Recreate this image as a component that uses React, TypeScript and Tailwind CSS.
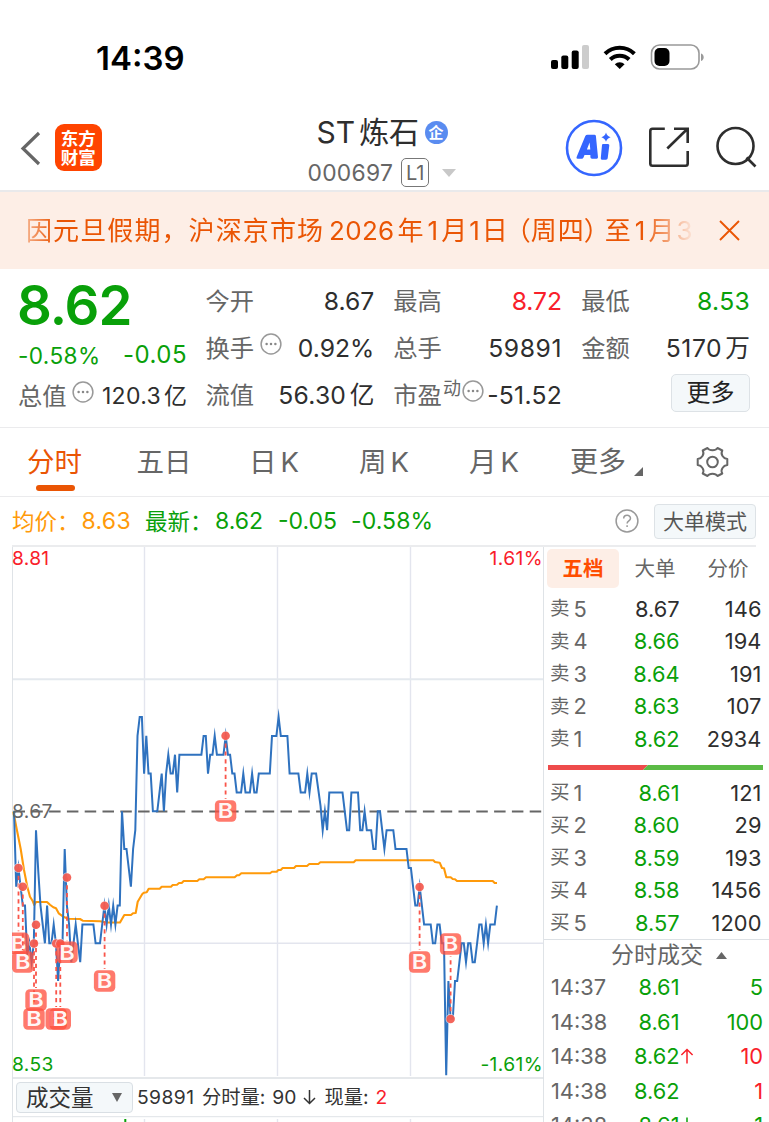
import React from "react";

const PRICE_TICKS: [number, number][] = [
  [0, 0], [1, -4], [2, -3], [3, -4], [4, -5], [5, -5], [6, -7.6], [7, -7], [8, -8], [9, -7], [10, -1], [11, -3.2], [12, -5],
  [14, -7], [15, -5], [16, -7], [17, -7], [18, -6], [19, -7], [20, -9], [21, -7], [22, -7], [23, -2], [24, -5], [25, -6],
  [26, -8], [27, -7], [28, -6], [29, -7], [30, -8], [31, -6], [36, -6], [37, -7], [39, -7], [40, -6], [41, -5], [42, -6],
  [43, -5], [44, -6], [45, -5], [46, -6], [47, -5], [48, -5], [49, 0], [50, -2], [51, -2], [53, -4], [54, -2], [55, -1],
  [56, 4], [57, 5], [58, 5], [59, 2], [60, 4], [61, 2], [62, 2], [63, 0], [65, 0], [66, 1], [67, 2], [68, 0], [69, 2],
  [70, 3], [71, 2], [72, 2], [73, 3], [74, 1], [75, 3], [85, 3], [86, 4], [87, 4], [88, 2], [89, 3], [90, 3], [91, 4],
  [92, 3], [95, 3], [96, 4], [97, 3], [98, 3], [99, 2], [100, 2], [101, 1], [103, 1], [104, 2], [105, 1], [107, 1],
  [108, 2], [109, 1], [110, 1], [111, 2], [116, 2], [117, 4], [119, 4], [120, 5], [121, 4], [124, 4], [125, 2], [129, 2],
  [130, 1], [132, 1], [133, 2], [134, 1], [135, 2], [137, 2], [139, 0.3], [140, -1], [141, 0], [142, -1], [143, 1],
  [149, 1], [151, -1], [152, -1], [153, 1], [156, 1], [157, -1], [158, -1], [159, 0], [160, -1], [162, -1], [163, -2],
  [164, -2], [165, 0], [166, 0], [168, -2], [169, -1], [172, -1], [173, -2], [178, -2], [179, -3], [180, -3], [182, -5],
  [183, -5], [184, -4], [185, -5], [186, -6], [189, -6], [190, -7], [191, -7], [192, -6], [193, -6], [194, -7], [195, -7],
  [196, -14], [197, -9], [198, -11], [199, -11], [200, -9], [201, -9], [202, -8], [203, -7], [204, -7], [205, -8],
  [206, -7], [207, -7], [208, -8], [209, -8], [210, -7], [211, -6], [212, -6], [213, -7], [214, -6], [215, -7], [216, -6],
  [218, -6], [219, -5],
];

const priceLine = PRICE_TICKS.map(([m, k]) => `${(14 + m * 2.205).toFixed(1)},${(811.3 - k * 18.86).toFixed(1)}`).join(" ");

const averageLine =
  "13.3,811.5 16.7,829 20.7,849 24,870 27.3,886.7 30,896.7 32.7,901 34.3,905 36,902 47,902 50,904.7 53.3,907.3 56,908.3 58.7,913.3 63.3,916.7 68.3,918.7 80,919 82.7,920.7 100,921.3 106.7,922.5 120,922.5 124.3,915 131,915 133,913.3 135.7,913 137.7,901.7 142.3,894 144,892.7 146.7,892.3 148.7,888.7 159.7,888.7 161.7,886.7 171,886.7 172.7,885 177,884.7 179,883 181.7,883 183.7,881 197.3,881 199.3,879.3 203.7,879.3 206,877.3 234.7,877.3 237,875.3 239,875.3 241.3,873.3 270,873.3 272,871.7 276.7,871.7 278.3,870 280.7,870 282.7,868 294,868 296,866 307,866 309.3,864 318.3,864 320.3,862.3 353.7,862.3 355.7,860.3 433.3,860.3 435,862 439.7,862.7 442,868 444,868.3 446.3,877.3 450.7,877.3 452.7,879 455,879.3 457,881 492.7,881 494.7,883 497,883";

const TRADES = [
  { x: 18.5, dot: 868, box: 943.3 },
  { x: 22.8, dot: 886.7, box: 962 },
  { x: 34, dot: 943.5, box: 1019 },
  { x: 36, dot: 924.7, box: 1000 },
  { x: 56.2, dot: 943.5, box: 1019 },
  { x: 60.3, dot: 943.5, box: 1019 },
  { x: 67, dot: 877.5, box: 952.3 },
  { x: 104.6, dot: 905.8, box: 981 },
  { x: 225.6, dot: 735.8, box: 811 },
  { x: 419.6, dot: 887, box: 962 },
  { x: 450.6, dot: 1019, box: 944 },
];

function Chart() {
  return (
    <svg className="block" width="544" height="577" viewBox="0 545 544 577">
      <defs>
        <clipPath id="plot"><rect x="12" y="545" width="532" height="577" /></clipPath>
      </defs>
      <g stroke="#e3e5ee" strokeWidth="1.4" fill="none">
        <path d="M144.5 547V1076M277.5 547V1076M410.5 547V1076M144.5 1119V1122M277.5 1119V1122M410.5 1119V1122" />
        <path d="M12 679.3H544" stroke="#e4e9ee" strokeWidth="2" />
        <path d="M12 943.3H544" />
        <path d="M12.5 545V1122M543.5 545V1122" stroke="#dfe3e7" strokeWidth="1" />
        <path d="M12 1078H544" stroke="#dde1e5" strokeWidth="1.5" />
        <path d="M12 1116.7H544" stroke="#dfe3e7" strokeWidth="1" />
      </g>
      <path d="M125.3 1119V1122" stroke="#09a009" strokeWidth="2" />
      <path d="M13.5 811.4H544" stroke="#666" strokeWidth="2" strokeDasharray="11.5 6.3" />
      <g clipPath="url(#plot)" fill="none">
        <polyline points={averageLine} stroke="#ff9a0a" strokeWidth="2.1" strokeLinejoin="round" />
        <polyline points={priceLine} stroke="#2f72bf" strokeWidth="2" strokeMiterlimit="10" />
        {TRADES.map((t, i) => {
          const down = t.box > t.dot;
          return (
            <g key={i}>
              <path
                d={`M${t.x} ${t.dot}V${down ? t.box - 12 : t.box + 12}`}
                stroke="#f9554a"
                strokeWidth="1.8"
                strokeDasharray="4.2 3.6"
              />
              <circle cx={t.x} cy={t.dot} r="5" fill="#fff" fillOpacity=".6" />
              <circle cx={t.x} cy={t.dot} r="4.3" fill="#f24a3e" fillOpacity=".85" />
              <rect x={t.x - 10.7} y={t.box - 10.7} width="21.4" height="21.4" rx="4.5" fill="#ff4f3e" fillOpacity=".76" />
              <text
                x={t.x}
                y={t.box + 7.2}
                textAnchor="middle"
                fontFamily="Inter, sans-serif"
                fontSize="20"
                fontWeight="600"
                textLength="15.5"
                lengthAdjust="spacingAndGlyphs"
                fill="#fff"
                fillOpacity=".95"
              >
                B
              </text>
            </g>
          );
        })}
      </g>
    </svg>
  );
}

function Dots({ className = "" }: { className?: string }) {
  return (
    <svg className={`shrink-0 ${className}`} width="22" height="22" viewBox="0 0 22 22" fill="none">
      <circle cx="11" cy="11" r="9.9" stroke="#999" strokeWidth="1.5" />
      <circle cx="6.6" cy="11" r="1.25" fill="#888" />
      <circle cx="11" cy="11" r="1.25" fill="#888" />
      <circle cx="15.4" cy="11" r="1.25" fill="#888" />
    </svg>
  );
}

function Stat({ label, value, color = "text-[#2e2e2e]", extra }: { label: string; value: React.ReactNode; color?: string; extra?: React.ReactNode }) {
  return (
    <div className="flex h-[47px] items-center whitespace-nowrap">
      <span className="text-[24.3px] text-[#666]">{label}</span>
      {extra}
      <span className={`ml-auto text-[24.7px] ${color}`}>{value}</span>
    </div>
  );
}

function Book({ side, no, price, qty, flat }: { side: string; no: number; price: string; qty: string; flat?: boolean }) {
  return (
    <div className="flex h-[32.5px] items-center pr-[7.5px] pl-[6px] text-[21.8px]">
      <span className="text-[19.5px] text-[#666]">{side}</span>
      <span className="ml-1 text-[#666]">{no}</span>
      <span className="flex-1" />
      <span className={`w-[80px] text-right ${flat ? "text-[#2e2e2e]" : "text-[#09a009]"}`}>{price}</span>
      <span className="w-[82px] text-right tracking-[0.1px] text-[#2e2e2e]">{qty}</span>
    </div>
  );
}

function Tick({ time, price, qty, up, arrow }: { time: string; price: string; qty: string; up?: boolean; arrow?: "up" | "down" }) {
  return (
    <div className="flex h-[34.5px] shrink-0 items-center pr-1.5 pl-[7px] text-[21.8px]">
      <span className="text-[#666]">{time}</span>
      <span className="flex-1" />
      <span className="text-[#09a009]">{price}</span>
      <span className="flex w-[83.5px] items-center">
        {arrow && (
          <svg className={arrow === "up" ? "text-[#f9202a]" : "rotate-180 text-[#09a009]"} width="14" height="18" viewBox="0 0 15 18" fill="none" stroke="currentColor" strokeWidth="1.6">
            <path d="M7.5 17V2M1.5 8l6-6 6 6" />
          </svg>
        )}
        <span className={`ml-auto ${up ? "text-[#f9202a]" : "text-[#09a009]"}`}>{qty}</span>
      </span>
    </div>
  );
}

function StatusBar() {
  return (
    <div className="flex h-[104px] items-start pr-[64px] pl-[96px]">
      <span className="mt-[38px] text-[33px] leading-10 font-semibold text-black">14:39</span>
      <svg className="mt-[44px] ml-auto" width="154" height="26" viewBox="551 44 154 26">
        <rect x="551" y="60" width="7" height="9" rx="2" />
        <rect x="561.3" y="55.5" width="7" height="13.5" rx="2" />
        <rect x="571.7" y="50.5" width="7" height="18.5" rx="2" />
        <rect x="582" y="45" width="7" height="24" rx="2" fill="#ccc" />
        <g fill="none" stroke="#000">
          <path d="M605 53.8a21 21 0 0 1 29.4 0" strokeWidth="4" />
          <path d="M610.3 59.5a13.4 13.4 0 0 1 18.8 0" strokeWidth="4" />
        </g>
        <path d="M619.7 69l-4.900-4.700a7 7 0 0 1 9.800 0z" />
        <rect x="651.5" y="45" width="47.5" height="24" rx="8" fill="none" stroke="#999" strokeWidth="1.6" />
        <rect x="654.5" y="48" width="15" height="18" rx="5" />
        <path d="M701 53.5c3.6 1 3.6 6.500 0 7.500z" fill="#999" />
      </svg>
    </div>
  );
}

function Header() {
  return (
    <div className="flex h-[88px] items-start border-b-2 border-[#e9e9eb] pr-3 pl-5">
      <svg className="mt-[27px]" width="21" height="36" viewBox="0 0 21 36" fill="none" stroke="#666" strokeWidth="3.2">
        <path d="M19 2L3 17.500L19 33" />
      </svg>
      <div className="mt-5 ml-[14px] flex h-[47px] w-[46.500px] flex-col items-center justify-center rounded-[9px] bg-[#ff4400] text-[17.500px] leading-[19px] font-bold text-white">
        <span>东方</span>
        <span>财富</span>
      </div>
      <div className="ml-[206px] flex w-[152px] flex-col">
        <div className="mt-2 flex h-10 items-center pl-[9px] text-[30px] whitespace-nowrap text-[#2e2e2e]">
          <span>ST</span>
          <span className="ml-[4px]">炼石</span>
          <span className="ml-[5.500px] flex h-[23px] w-[23px] items-center justify-center rounded-full bg-[#5a8cf0] text-[15px] leading-none font-bold text-white">企</span>
        </div>
        <div className="flex h-10 items-center pt-px text-[22.800px] text-[#666]">
          <span className="tracking-[0.300px]">000697</span>
          <span className="ml-[8px] flex h-[29px] w-[28px] items-center justify-center rounded-[5px] border border-[#777] text-[20px]">L1</span>
          <svg className="ml-[13px]" width="14" height="8" viewBox="0 0 14 8">
            <path d="M0 0H14L7 8z" fill="#c8c8c8" />
          </svg>
        </div>
      </div>
      <svg className="mt-[15px] ml-auto" width="58" height="58" viewBox="565 119 58 58">
        <circle cx="594" cy="148" r="27" fill="none" stroke="#3566ff" strokeWidth="2.600" />
        <path
          fill="#3566ff"
          fillRule="evenodd"
          d="M587.500 134.700H594.500Q595.700 134.700 595.900 136L598 157.300Q598 158.700 596.700 158.700H592Q590.500 158.700 590.400 157.300V155H584.500L583.500 157.500Q583 158.700 581.700 158.700H577.500Q576 158.500 576.600 157L585.300 136Q586 134.700 587.500 134.700ZM589.600 142.500L586.900 149.500H590.300ZM603 144H608Q609.500 144 609.300 145.500L607.700 158.300Q607.500 159.700 606 159.700H602Q600.500 159.700 600.800 158L602 145Q602.200 144 603 144ZM606 132.600Q607 136.200 610.600 137.200Q607 138.200 606 141.800Q605 138.200 601.400 137.200Q605 136.200 606 132.600Z"
        />
      </svg>
      <svg className="mt-[23px] ml-[26.500px]" width="41" height="41" viewBox="0 0 41 41" fill="none" stroke="#2e2e2e" strokeWidth="2.600">
        <path d="M15.800 1.800H3.500Q1.300 1.800 1.300 4V36.500Q1.300 38.700 3.500 38.700H36.500Q38.700 38.700 38.700 36.500V24M25 1.800H38.700V16M37.500 2.800L18.300 21.500" />
      </svg>
      <svg className="mt-[22px] ml-[26px]" width="41" height="42" viewBox="0 0 41 42" fill="none" stroke="#2e2e2e" strokeWidth="2.600">
        <circle cx="19.500" cy="20" r="18" />
        <path d="M30.500 31.500L39.500 40.500" />
      </svg>
    </div>
  );
}

function Notice() {
  return (
    <div className="flex h-[77px] items-center bg-[#fdeee6] pr-[29px] pl-[26px] text-[#ea5504]">
      <div className="flex w-[670px] items-center overflow-hidden pt-px text-[26px] whitespace-nowrap [mask-image:linear-gradient(to_right,rgba(0,0,0,.4),#000_28px,#000_615px,rgba(0,0,0,.1)_664px)]">
        <span className="tracking-[1.100px]">因元旦假期，沪深京市场</span>
        <span className="ml-[5px] tracking-[0.300px]">2026</span>
        <span className="ml-[3px]">年</span>
        <span className="ml-[4px]">1</span>
        <span className="ml-[3px]">月</span>
        <span className="ml-[2px]">1</span>
        <span className="ml-[2px]">日</span>
        <span className="-ml-[3px]">（</span>
        <span className="tracking-[1px]">周四</span>
        <span className="-ml-px">）</span>
        <span className="-ml-[5px]">至</span>
        <span className="ml-[4px]">1</span>
        <span className="ml-[3px]">月</span>
        <span className="ml-[2px]">3</span>
      </div>
      <svg className="ml-auto" width="21" height="21" viewBox="0 0 21 21" fill="none" stroke="#ea5504" strokeWidth="1.900">
        <path d="M1 1L20 20M20 1L1 20" />
      </svg>
    </div>
  );
}

function Quote() {
  return (
    <div className="flex h-[159px] gap-[18.500px] border-b border-[#ebebed] pr-[19px] pl-[18px] pt-[9.500px]">
      <div className="flex w-[169px] flex-col whitespace-nowrap">
        <div className="-ml-px flex h-[54px] items-center text-[54.500px] leading-none font-semibold tracking-[-1px] text-[#09a009]">8.62</div>
        <div className="flex h-[46px] items-center justify-between text-[#09a009]">
          <span className="text-[22.600px] tracking-[0.400px]">-0.58%</span>
          <span className="text-[24px] tracking-[0.500px]">-0.05</span>
        </div>
        <div className="-mt-[5px] flex h-[47px] items-center">
          <span className="text-[24.300px] text-[#666]">总值</span>
          <Dots className="mb-[11px] ml-[5.500px]" />
          <span className="ml-auto flex text-[23px] tracking-[0.300px] text-[#2e2e2e]">120.3<span className="ml-[3px] tracking-normal">亿</span></span>
        </div>
      </div>
      <div className="grid flex-1 grid-cols-3 content-start gap-x-[19px]">
        <Stat label="今开" value="8.67" />
        <Stat label="最高" value="8.72" color="text-[#f9202a]" />
        <Stat label="最低" value={<span className="tracking-[0.300px]">8.53</span>} color="text-[#09a009]" />
        <Stat label="换手" value="0.92%" extra={<Dots className="mb-[10px] ml-[6px]" />} />
        <Stat label="总手" value={<span className="tracking-[0.600px]">59891</span>} />
        <Stat label="金额" value={<><span className="tracking-[0.600px]">5170</span><span className="ml-[3px]">万</span></>} />
        <Stat label="流值" value={<><span className="tracking-[0.200px]">56.30</span><span className="ml-[3.500px]">亿</span></>} />
        <Stat
          label="市盈"
          value={<span className="tracking-[0.300px]">-51.52</span>}
          extra={<><span className="mb-[15px] ml-px text-[18px] text-[#666]">动</span><Dots className="mb-[10px] ml-[1.500px]" /></>}
        />
        <div className="flex h-[47px] items-center justify-end">
          <div className="-mt-[6px] flex h-[38px] w-[79px] items-center justify-center rounded-[5px] border border-[#dde2e6] bg-[#f4f8fa] pt-px text-[24px] text-[#222]">更多</div>
        </div>
      </div>
    </div>
  );
}

function Tabs() {
  const tab = "flex h-full w-[110px] shrink-0 items-center justify-center pr-[2px] text-[27.500px] text-[#666]";
  return (
    <div className="flex h-[69px] items-center border-b border-[#ebebed]">
      <div className="relative flex h-full w-[110px] shrink-0 items-center justify-center pr-px text-[27.500px] text-[#ea5504]">
        分时
        <span className="absolute top-[57px] left-[35.500px] h-[6px] w-[39px] rounded-full bg-[#ea5504]" />
      </div>
      <div className={tab}>五日</div>
      <div className={tab}>日<span className="ml-1">K</span></div>
      <div className={tab}>周<span className="ml-1">K</span></div>
      <div className={tab}>月<span className="ml-1">K</span></div>
      <div className="flex h-full items-center pt-px pl-[20px] text-[28px] text-[#666]">
        更多
        <svg className="mt-[18px] ml-[8px]" width="9" height="9" viewBox="0 0 9 9"><path d="M9 0V9H0z" fill="#666" /></svg>
      </div>
      <svg className="ml-auto mr-[40px]" width="33" height="32" viewBox="-16.500 -16 33 32" fill="none" stroke="#666" strokeWidth="2">
        <circle r="5.300" />
        <path strokeLinejoin="round" d="M-5 -14Q-3.500 -11.700 0 -11.700Q3.500 -11.700 5 -14L9.800 -11.500Q8.200 -8.500 10 -6Q11.600 -3.300 14.800 -3V3Q11.600 3.300 10 6Q8.200 8.500 9.800 11.500L5 14Q3.500 11.700 0 11.700Q-3.500 11.700 -5 14L-9.800 11.500Q-8.200 8.500 -10 6Q-11.600 3.300 -14.800 3V-3Q-11.600 -3.300 -10 -6Q-8.200 -8.500 -9.800 -11.500Z" />
      </svg>
    </div>
  );
}

function Summary() {
  return (
    <div className="flex h-[48px] items-center pr-[13px] pl-3 pt-px text-[23px] whitespace-nowrap text-[#09a009]">
      <span className="w-[69.500px] shrink-0 text-[22.500px] text-[#ff9a0a]">均价：</span>
      <span className="w-[63.500px] shrink-0 tracking-[0.300px] text-[#ff9a0a]">8.63</span>
      <span className="w-[70px] shrink-0 text-[22.500px]">最新：</span>
      <span className="w-[63px] shrink-0">8.62</span>
      <span className="w-[73px] shrink-0">-0.05</span>
      <span className="tracking-[0.100px]">-0.58%</span>
      <svg className="mb-px ml-auto" width="24" height="24" viewBox="0 0 24 24" fill="none" stroke="#999" strokeWidth="1.500">
        <circle cx="12" cy="12" r="10.900" />
        <path d="M8.700 9.600c0-4.400 6.800-4.300 6.800-.3 0 2.600-3.400 2.600-3.400 5.300M12.100 16.300v1.800" />
      </svg>
      <div className="ml-[15px] flex h-[35px] w-[102px] items-center justify-center rounded-[4px] border border-[#dde2e6] bg-[#f4f8fa] text-[21px] text-[#555]">大单模式</div>
    </div>
  );
}

export default function App() {
  return (
    <div className="flex h-[1122px] w-[769px] flex-col overflow-hidden bg-white font-[Inter,'Noto_Sans_CJK_SC',sans-serif] leading-[1.2]">
      <StatusBar />
      <Header />
      <Notice />
      <Quote />
      <Tabs />
      <Summary />
      <div className="flex h-[577px]">
        <div className="relative w-[544px] shrink-0">
          <Chart />
          <div className="absolute top-0 left-[12px] h-[1.500px] w-[744px] bg-[#ebecee]" />
          <span className="absolute top-[1.500px] left-[12px] text-[19.200px] tracking-[0.300px] text-[#f9202a]">8.81</span>
          <span className="absolute top-[1.500px] right-[1px] text-[19.200px] tracking-[0.400px] text-[#f9202a]">1.61%</span>
          <span className="absolute top-[254.500px] left-[12px] text-[19.200px] tracking-[0.400px] text-[#666]">8.67</span>
          <span className="absolute top-[507.500px] left-[12px] text-[19.200px] tracking-[0.400px] text-[#09a009]">8.53</span>
          <span className="absolute top-[507.500px] right-[1px] text-[19.200px] tracking-[0.400px] text-[#09a009]">-1.61%</span>
          <div className="absolute top-[536.500px] left-[16px] flex h-[32px] items-center text-[19.300px] whitespace-nowrap text-[#333]">
            <div className="flex h-[31px] w-[117px] items-center rounded-[4px] border border-[#d9dfe4] bg-[#f4f8fa] pl-[9px] text-[22.500px]">
              成交量
              <svg className="ml-[18px]" width="10" height="9" viewBox="0 0 10 9"><path d="M0 0H10L5 9z" fill="#666" /></svg>
            </div>
            <span className="ml-[4px] tracking-[0.400px]">59891</span>
            <span className="ml-[7.500px]">分时量:</span>
            <span className="ml-[7px]">90</span>
            <svg className="ml-[7px]" width="13" height="15" viewBox="0 0 13 15" fill="none" stroke="#333" strokeWidth="1.500"><path d="M6.500 0V13.500M1 8l5.500 5.500L12 8" /></svg>
            <span className="ml-[8px]">现量:</span>
            <span className="ml-[7px] text-[#f9202a]">2</span>
          </div>
        </div>
        <div className="flex min-w-0 flex-1 flex-col overflow-hidden pt-[4px]">
          <div className="flex h-[39px] shrink-0 items-center pl-[3px] text-[20.500px] text-[#666]">
            <span className="flex h-full w-[72px] items-center justify-center rounded-[5px] bg-[#fdeee6] pt-px font-bold text-[#ff4d00]">五档</span>
            <span className="w-[73px] pt-px pr-px text-center">大单</span>
            <span className="w-[72px] pt-px text-center">分价</span>
          </div>
          <div className="pt-[4.500px]">
            <Book side="卖" no={5} price="8.67" qty="146" flat />
            <Book side="卖" no={4} price="8.66" qty="194" />
            <Book side="卖" no={3} price="8.64" qty="191" />
            <Book side="卖" no={2} price="8.63" qty="107" />
            <Book side="卖" no={1} price="8.62" qty="2934" />
          </div>
          <svg className="mt-[9.500px] ml-[4px] shrink-0" width="215" height="5" viewBox="0 0 215 5">
            <path d="M0 0H100L95 5H0z" fill="#ee4b4b" />
            <path d="M100 0H215V5H95z" fill="#5bbb46" />
          </svg>
          <div className="pt-[7px]">
            <Book side="买" no={1} price="8.61" qty="121" />
            <Book side="买" no={2} price="8.60" qty="29" />
            <Book side="买" no={3} price="8.59" qty="193" />
            <Book side="买" no={4} price="8.58" qty="1456" />
            <Book side="买" no={5} price="8.57" qty="1200" />
          </div>
          <div className="flex h-[31px] shrink-0 items-center border-t border-[#dde1e5] pt-px pl-[67px] text-[23px] text-[#666]">
            分时成交
            <svg className="ml-[13px]" width="11" height="7" viewBox="0 0 11 7"><path d="M0 7H11L5.500 0z" fill="#666" /></svg>
          </div>
          <Tick time="14:37" price="8.61" qty="5" />
          <Tick time="14:38" price="8.61" qty="100" />
          <Tick time="14:38" price="8.62" qty="10" up arrow="up" />
          <Tick time="14:38" price="8.62" qty="1" up />
          <Tick time="14:38" price="8.61" qty="1" arrow="down" />
        </div>
      </div>
    </div>
  );
}
